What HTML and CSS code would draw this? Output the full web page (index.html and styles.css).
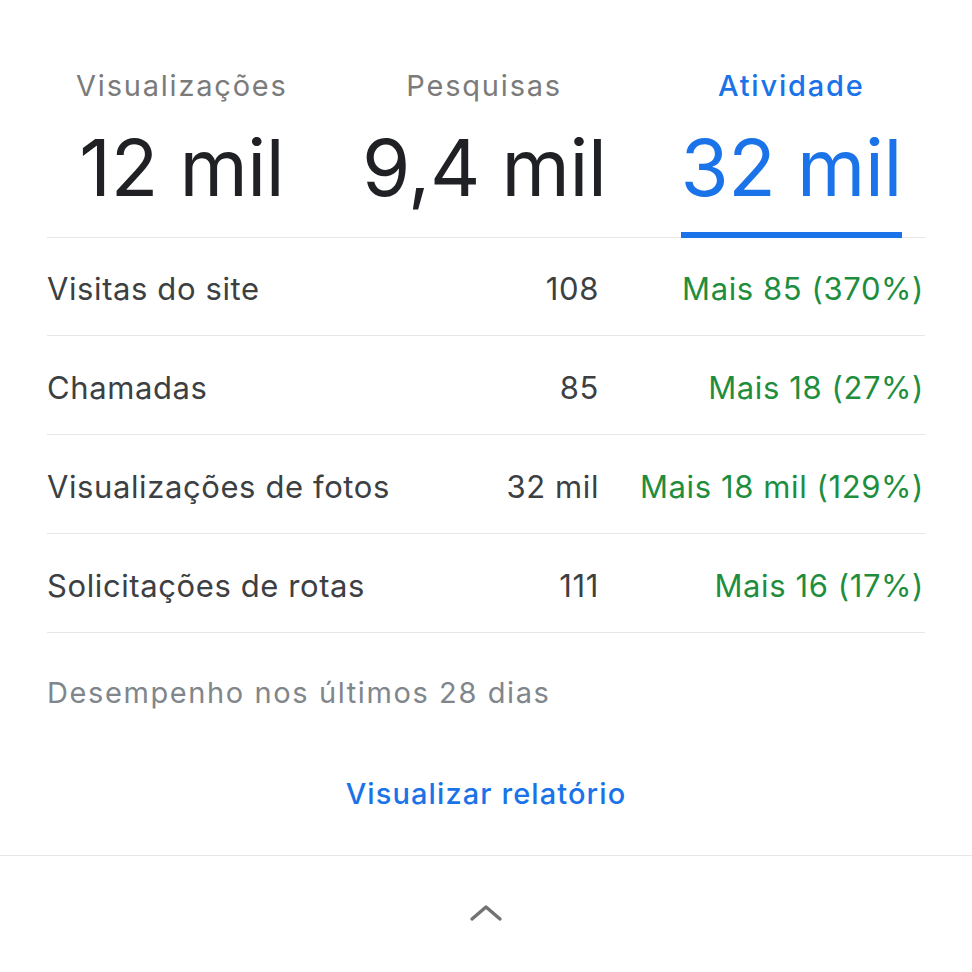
FILE: index.html
```html
<!DOCTYPE html>
<html lang="pt-BR">
<head>
<meta charset="UTF-8">
<meta name="viewport" content="width=device-width, initial-scale=1.0">
<title>Desempenho</title>
<link rel="stylesheet" href="styles.css">
</head>
<body>
<div class="card">
    <div class="content">
        <div class="tabs">
            <div class="tab">
                <div class="tab-label">Visualizações</div>
                <div class="tab-value">12 mil</div>
            </div>
            <div class="tab">
                <div class="tab-label">Pesquisas</div>
                <div class="tab-value">9,4 mil</div>
            </div>
            <div class="tab active">
                <div class="tab-label">Atividade</div>
                <div class="tab-value">32 mil</div>
            </div>
        </div>

        <div class="stats">
            <div class="stat-row">
                <span class="stat-name">Visitas do site</span>
                <span class="stat-value">108</span>
                <span class="stat-change">Mais 85 (370%)</span>
            </div>
            <div class="stat-row">
                <span class="stat-name">Chamadas</span>
                <span class="stat-value">85</span>
                <span class="stat-change">Mais 18 (27%)</span>
            </div>
            <div class="stat-row">
                <span class="stat-name">Visualizações de fotos</span>
                <span class="stat-value">32 mil</span>
                <span class="stat-change">Mais 18 mil (129%)</span>
            </div>
            <div class="stat-row">
                <span class="stat-name">Solicitações de rotas</span>
                <span class="stat-value">111</span>
                <span class="stat-change">Mais 16 (17%)</span>
            </div>
        </div>

        <p class="period">Desempenho nos últimos 28 dias</p>
    </div>

    <div class="report">
        <a href="#" class="report-link">Visualizar relatório</a>
    </div>

    <div class="collapse">
        <svg class="chevron" width="34" height="20" viewBox="0 0 34 20">
            <polyline points="3,17 17,5 31,17" fill="none" stroke="#737373" stroke-width="3.4" stroke-linecap="round" stroke-linejoin="round"/>
        </svg>
    </div>
</div>
</body>
</html>
```

FILE: styles.css
```css
body {
    font-family: Inter, Roboto, Arial, sans-serif;
    margin: 0;
    padding: 0;
    background-color: #ffffff;
}
.content {
    padding: 0 47px;
}
.tabs {
    display: flex;
    justify-content: space-between;
    padding: 68px 23px 0 29px;
    border-bottom: 1px solid #e6e6e6;
}
.tab {
    display: flex;
    flex-direction: column;
    align-items: center;
    border-bottom: 6px solid transparent;
    padding-bottom: 22px;
    margin-bottom: -1px;
}
.tab-label {
    font-size: 29px;
    line-height: 36px;
    letter-spacing: 1.8px;
    color: #7b7b7b;
}
.tab-value {
    font-size: 78px;
    line-height: 84px;
    margin-top: 22px;
    letter-spacing: -0.4px;
    color: #202124;
}
.tab.active {
    border-bottom-color: #1a73e8;
}
.tab.active .tab-label,
.tab.active .tab-value {
    color: #1a73e8;
}
.tab.active .tab-label {
    font-weight: 500;
}
.stat-row {
    display: flex;
    align-items: center;
    height: 98px;
    padding: 4px 1px 0 0;
    box-sizing: border-box;
    border-bottom: 1px solid #e6e6e6;
    font-size: 31px;
    letter-spacing: 0.6px;
}
.stat-row + .stat-row {
    height: 99px;
}
.stat-name {
    flex: 1;
    color: #3c4043;
}
.stat-value {
    color: #3c4043;
}
.stat-change {
    width: 325px;
    text-align: right;
    color: #1e8e3e;
}
.period {
    margin: 42px 0 0;
    font-size: 29px;
    line-height: 36px;
    letter-spacing: 1.6px;
    color: #80868b;
}
.report {
    text-align: center;
    padding: 65px 0 43px;
    border-bottom: 1px solid #e6e6e6;
}
.report-link {
    font-size: 29px;
    line-height: 36px;
    font-weight: 500;
    letter-spacing: 1.1px;
    color: #1a73e8;
    text-decoration: none;
}
.collapse {
    display: flex;
    justify-content: center;
    padding-top: 46px;
}
```
